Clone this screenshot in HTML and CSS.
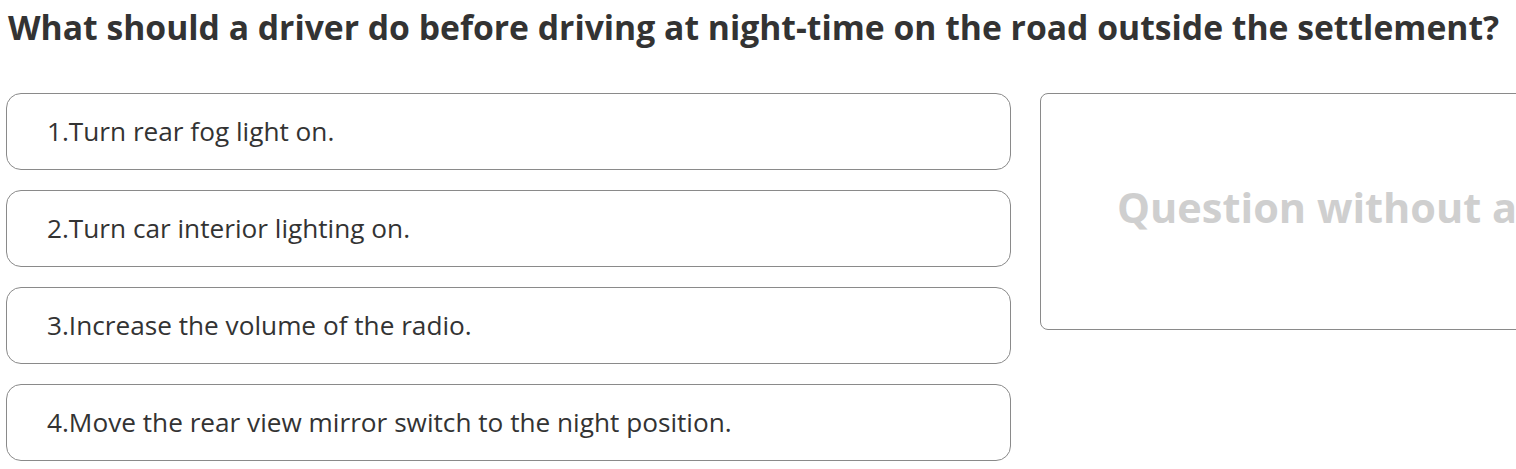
FILE: index.html
```html
<!DOCTYPE html>
<html>
<head>
<meta charset="utf-8">
<link rel="stylesheet" href="styles.css">
</head>
<body>
<h1 class="title">What should a driver do before driving at night-time on the road outside the settlement?</h1>
<div class="content">
  <div class="answers">
    <div class="answer">1.Turn rear fog light on.</div>
    <div class="answer">2.Turn car interior lighting on.</div>
    <div class="answer">3.Increase the volume of the radio.</div>
    <div class="answer">4.Move the rear view mirror switch to the night position.</div>
  </div>
  <div class="image-box">
    <span class="no-image">Question without an image</span>
  </div>
</div>
</body>
</html>
```

FILE: styles.css
```css
html, body {
  margin: 0;
  padding: 0;
  background: #fff;
  overflow: hidden;
}
body {
  font-family: "Open Sans", "DejaVu Sans", sans-serif;
  color: #333;
  width: 1516px;
}
.title {
  margin: 0;
  padding: 5px 0 0 8px;
  font-size: 33.7px;
  font-weight: 700;
  line-height: 44px;
  white-space: nowrap;
  color: #333;
}
.content {
  display: flex;
  align-items: flex-start;
  gap: 29px;
  padding: 44px 0 0 6px;
}
.answers {
  display: flex;
  flex-direction: column;
  gap: 20px;
  width: 1005px;
  flex: none;
}
.answer {
  box-sizing: border-box;
  height: 77px;
  border: 1px solid #8a8a8a;
  border-radius: 15px;
  display: flex;
  align-items: center;
  padding-left: 40px;
  padding-bottom: 1px;
  font-size: 26.2px;
  color: #333;
}
.image-box {
  box-sizing: border-box;
  flex: none;
  width: 1005px;
  height: 237px;
  border: 1px solid #8a8a8a;
  border-radius: 8px;
  display: flex;
  align-items: center;
  padding-left: 76px;
  padding-bottom: 10px;
}
.no-image {
  font-size: 41.5px;
  font-weight: 700;
  color: #cfcfcf;
  white-space: nowrap;
}
```
